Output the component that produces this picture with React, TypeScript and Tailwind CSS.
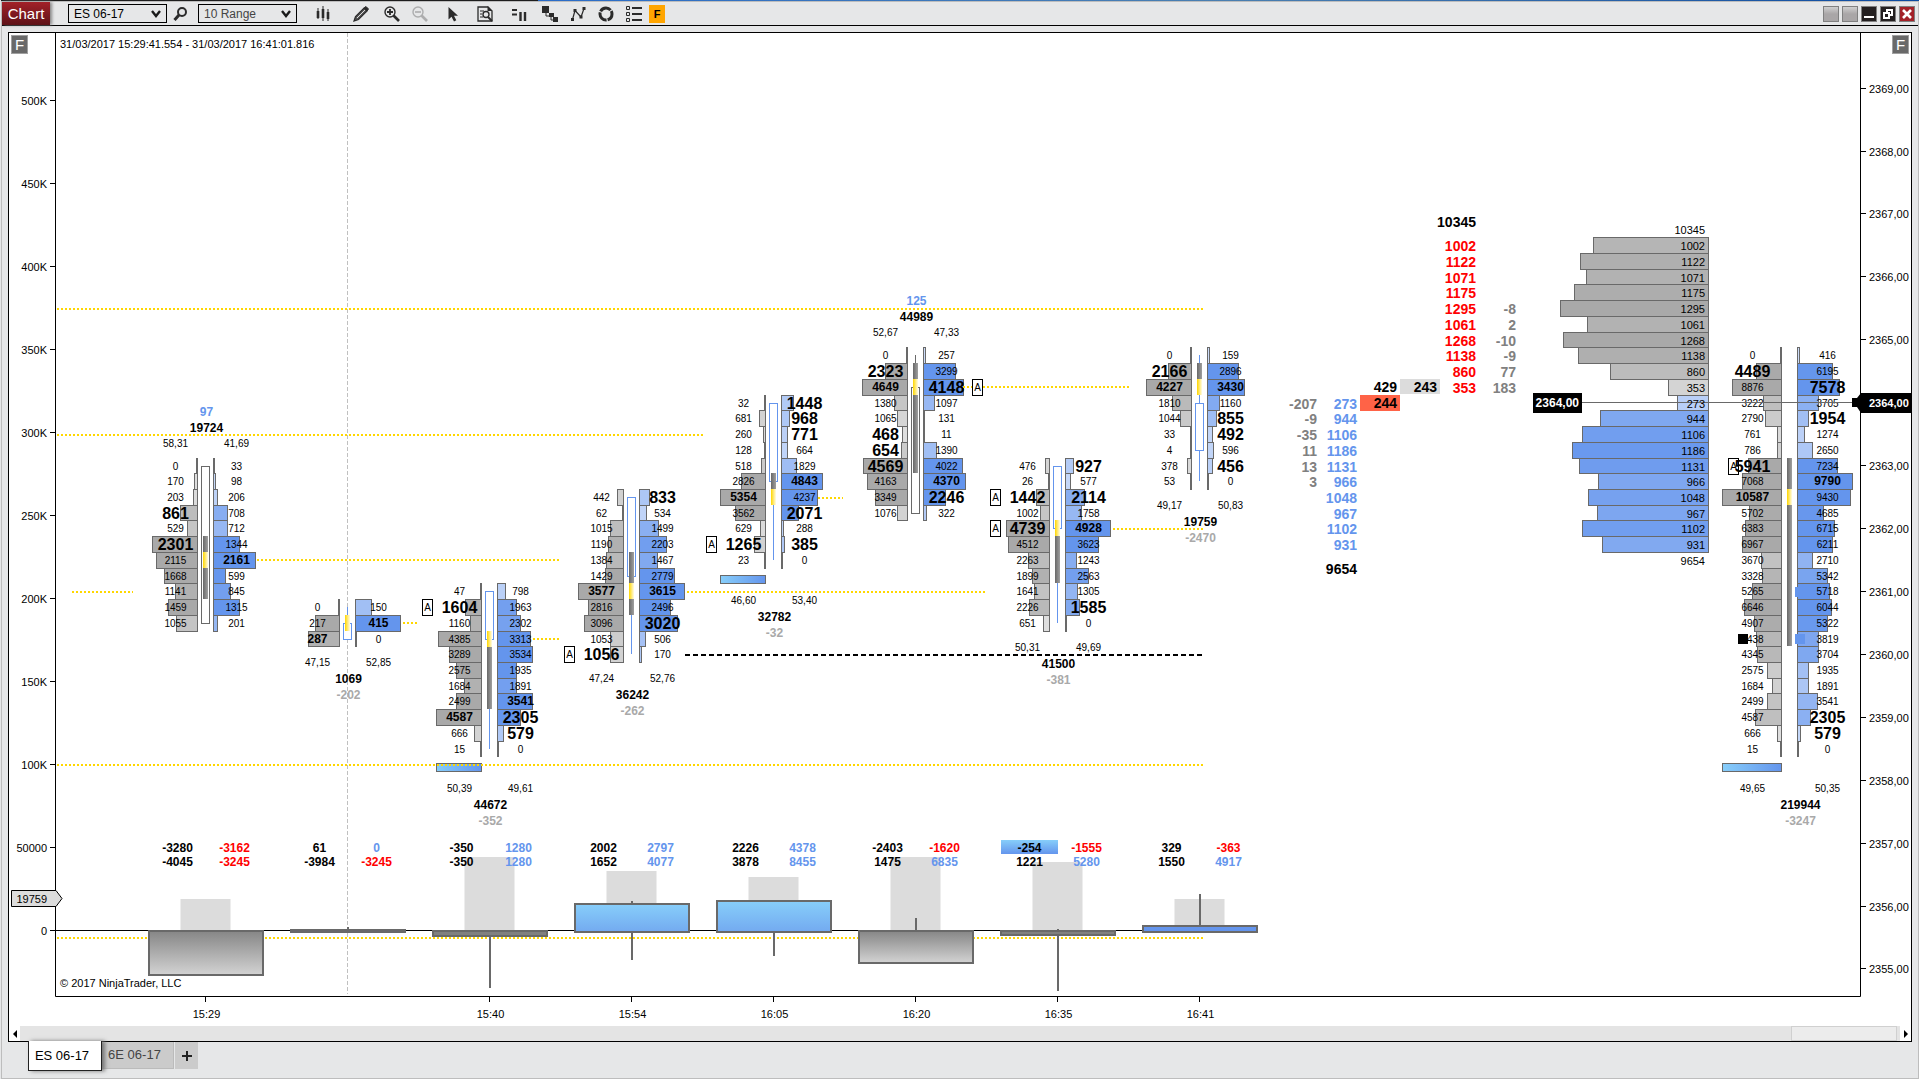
import React from 'react';

type Row = [bid: number, ask: number, imbalance?: 'a' | 'b' | 'ab'];

interface Footprint {
  x: number;
  top: number;
  rows: Row[];
  width?: number;
  labelOffset?: number;
  totalOffset?: number;
  up?: boolean;
  body?: [number, number];
  wick?: [number, number];
  valueArea?: [number, number];
  poc: number;
  alertsLeft?: number[];
  alertsRight?: number[];
  unfinished?: boolean;
  labelsOnTop?: boolean;
  pct: [string, string];
  total: string;
  delta: string;
}

interface Volume {
  x: number;
  time?: string;
  stats: [string, string, string, string];
  volumeTop?: number;
  box: [number, number];
  wick?: [number, number];
  fill: string;
}

const BLUE = '#6495ed';
const GRAY = '#a9a9a9';
const EDGE = '#696969';
const GOLD = '#ffd700';

const priceY = (price: number) => 88.5 + (2369 - price) * 62.92;
const rowTop = (price: number) => Math.round(priceY(price) - 8.5);

const footprints: Footprint[] = [
  {
    x: 205.5,
    top: 2363,
    rows: [[0, 33], [170, 98], [203, 206], [861, 708, 'b'], [529, 712], [2301, 1344, 'b'], [2115, 2161], [1668, 599], [1141, 845], [1459, 1315], [1055, 201]],
    body: [0, 10],
    valueArea: [5, 9],
    poc: 6,
    labelsOnTop: true,
    pct: ['58,31', '41,69'],
    total: '19724',
    delta: '97',
  },
  {
    x: 347.5,
    top: 2360.75,
    rows: [[0, 150], [217, 415], [287, 0]],
    up: true,
    body: [1, 2],
    wick: [0, 2],
    poc: 1,
    pct: ['47,15', '52,85'],
    total: '1069',
    delta: '-202',
  },
  {
    x: 489.5,
    top: 2361,
    rows: [[47, 798], [1604, 1963, 'b'], [1160, 2302], [4385, 3313], [3289, 3534], [2575, 1935], [1684, 1891], [2499, 3541], [4587, 2305, 'a'], [666, 579, 'a'], [15, 0]],
    up: true,
    body: [0, 3],
    wick: [0, 10],
    valueArea: [3, 8],
    poc: 3,
    alertsLeft: [1],
    unfinished: true,
    pct: ['50,39', '49,61'],
    total: '44672',
    delta: '-352',
  },
  {
    x: 631.5,
    top: 2362.5,
    rows: [[442, 833, 'a'], [62, 534], [1015, 1499], [1190, 2203], [1384, 1467], [1429, 2779], [3577, 3615], [2816, 2496], [3096, 3020, 'a'], [1053, 506], [1056, 170, 'b']],
    up: true,
    body: [0, 5],
    wick: [0, 10],
    valueArea: [4, 8],
    poc: 6,
    alertsLeft: [10],
    pct: ['47,24', '52,76'],
    total: '36242',
    delta: '-262',
  },
  {
    x: 773.5,
    top: 2364,
    rows: [[32, 1448, 'a'], [681, 968, 'a'], [260, 771, 'a'], [128, 664], [518, 1829], [2826, 4843], [5354, 4237], [3562, 2071, 'a'], [629, 288], [1265, 385, 'ab'], [23, 0]],
    up: true,
    body: [0, 5],
    wick: [0, 10],
    valueArea: [5, 7],
    poc: 6,
    alertsLeft: [9],
    unfinished: true,
    pct: ['46,60', '53,40'],
    total: '32782',
    delta: '-32',
  },
  {
    x: 915.5,
    top: 2364.75,
    rows: [[0, 257], [2323, 3299, 'b'], [4649, 4148, 'a'], [1380, 1097], [1065, 131], [468, 11, 'b'], [654, 1390, 'b'], [4569, 4022, 'b'], [4163, 4370], [3349, 2246, 'a'], [1076, 322]],
    body: [2, 10],
    wick: [0, 10],
    valueArea: [1, 8],
    poc: 2,
    alertsRight: [2],
    labelsOnTop: true,
    pct: ['52,67', '47,33'],
    total: '44989',
    delta: '125',
  },
  {
    x: 1057.5,
    top: 2363,
    rows: [[476, 927, 'a'], [26, 577], [1442, 2114, 'ab'], [1002, 1758], [4739, 4928, 'b'], [4512, 3623], [2263, 1243], [1899, 2563], [1641, 1305], [2226, 1585, 'a'], [651, 0]],
    up: true,
    body: [0, 4],
    wick: [0, 10],
    valueArea: [4, 8],
    poc: 4,
    alertsLeft: [2, 4],
    pct: ['50,31', '49,69'],
    total: '41500',
    delta: '-381',
  },
  {
    x: 1199.5,
    top: 2364.75,
    rows: [[0, 159], [2166, 2896, 'b'], [4227, 3430], [1810, 1160], [1044, 855, 'a'], [33, 492, 'a'], [4, 596], [378, 456, 'a'], [53, 0]],
    up: true,
    body: [3, 6],
    wick: [0, 8],
    valueArea: [1, 3],
    poc: 2,
    pct: ['49,17', '50,83'],
    total: '19759',
    delta: '-2470',
  },
  {
    x: 1789.5,
    top: 2364.75,
    rows: [[0, 416], [4489, 6195, 'b'], [8876, 7578, 'a'], [3222, 3705], [2790, 1954, 'a'], [761, 1274], [786, 2650], [5941, 7234, 'b'], [7068, 9790], [10587, 9430], [5702, 4685], [6383, 6715], [6967, 6211], [3670, 2710], [3328, 5342], [5265, 5718], [6646, 6044], [4907, 5322], [4438, 3819], [4345, 3704], [2575, 1935], [1684, 1891], [2499, 3541], [4587, 2305, 'a'], [666, 579, 'a'], [15, 0]],
    width: 59,
    labelOffset: 37,
    totalOffset: 11,
    valueArea: [7, 19],
    poc: 9,
    alertsLeft: [7],
    unfinished: true,
    pct: ['49,65', '50,35'],
    total: '219944',
    delta: '-3247',
  },
];

const volumes: Volume[] = [
  { x: 205.5, time: '15:29', stats: ['-3280', '-3162', '-4045', '-3245'], volumeTop: 899, box: [930, 976], fill: 'url(#deltaDown)' },
  { x: 347.5, stats: ['61', '0', '-3984', '-3245'], box: [929, 933], wick: [927, 933], fill: EDGE },
  { x: 489.5, time: '15:40', stats: ['-350', '1280', '-350', '1280'], volumeTop: 857, box: [930, 937], wick: [930, 988], fill: '#808080' },
  { x: 631.5, time: '15:54', stats: ['2002', '2797', '1652', '4077'], volumeTop: 871, box: [903, 933], wick: [901, 960], fill: 'url(#deltaUp)' },
  { x: 773.5, time: '16:05', stats: ['2226', '4378', '3878', '8455'], volumeTop: 877, box: [900, 933], wick: [900, 956], fill: 'url(#deltaUp)' },
  { x: 915.5, time: '16:20', stats: ['-2403', '-1620', '1475', '6835'], volumeTop: 857, box: [930, 964], wick: [918, 932], fill: 'url(#deltaDown)' },
  { x: 1057.5, time: '16:35', stats: ['-254', '-1555', '1221', '5280'], volumeTop: 862, box: [930, 936], wick: [929, 991], fill: '#808080' },
  { x: 1199.5, time: '16:41', stats: ['329', '-363', '1550', '4917'], volumeTop: 899, box: [925, 933], wick: [894, 930], fill: BLUE },
];

const goldLines: [number, number, number][] = [
  [309, 57, 1203],
  [435, 57, 703],
  [560, 257, 559],
  [592, 72, 133],
  [623, 403, 417],
  [639, 533, 559],
  [592, 687, 985],
  [498, 818, 843],
  [387, 963, 1129],
  [529, 1113, 1203],
  [765, 57, 1203],
];

const asks = [1002, 1122, 1071, 1175, 1295, 1061, 1268, 1138, 860, 353];
const bids = [273, 944, 1106, 1186, 1131, 966, 1048, 967, 1102, 931];
const askChanges = ['', '', '', '', '-8', '2', '-10', '-9', '77', '183'];
const bidChanges = ['-207', '-9', '-35', '11', '13', '3'];

const leftAxis = ['0', '50000', '100K', '150K', '200K', '250K', '300K', '350K', '400K', '450K', '500K'];
const rightAxis = [2369, 2368, 2367, 2366, 2365, 2363, 2362, 2361, 2360, 2359, 2358, 2357, 2356, 2355];

function CellText({ x, top, value, big, max }: { x: number; top: number; value: number; big: boolean; max: boolean }) {
  if (big) {
    return <text x={x} y={top + 14} textAnchor="middle" className="text-[16px] font-bold">{value}</text>;
  }
  if (max) {
    return <text x={x} y={top + 12} textAnchor="middle" className="text-[12px] font-bold">{value}</text>;
  }
  return <text x={x} y={top + 12} textAnchor="middle" className="text-[10px]">{value}</text>;
}

function FootprintBar({ data }: { data: Footprint }) {
  const { x, rows, width = 45, labelOffset = 30, totalOffset = 1 } = data;
  const tops = rows.map((_, i) => rowTop(data.top - i * 0.25));
  const bottom = rowTop(data.top - rows.length * 0.25);
  const topOf = (i: number) => (i < tops.length ? tops[i] : bottom);
  const maxBid = Math.max(...rows.map((r) => r[0]));
  const maxAsk = Math.max(...rows.map((r) => r[1]));
  const maxSide = Math.max(maxBid, maxAsk);
  const maxTotal = Math.max(...rows.map((r) => r[0] + r[1]));
  const stroke = data.up ? BLUE : EDGE;
  const below = bottom + (data.unfinished ? 16 : 0);
  const [pctY, totalY, deltaY] = data.labelsOnTop
    ? [tops[0] - 11, tops[0] - 26, tops[0] - 42]
    : [below + 20, below + 37, below + 53];

  return (
    <g>
      {rows.map(([bid, ask], i) => {
        const bidWidth = Math.max(1, Math.round((bid / maxSide) * width));
        const askWidth = Math.max(1, Math.round((ask / maxSide) * width));
        const opacity = Math.min(1, 0.3 + ((bid + ask) / maxTotal) * 1.3);
        const h = topOf(i + 1) - tops[i];
        return (
          <g key={i} stroke={EDGE} fillOpacity={opacity}>
            <rect x={x - 8 - bidWidth} y={tops[i] + 0.5} width={bidWidth} height={h} fill={GRAY} />
            <rect x={x + 8} y={tops[i] + 0.5} width={askWidth} height={h} fill={BLUE} />
          </g>
        );
      })}

      {data.wick && <line x1={x} x2={x} y1={tops[data.wick[0]] + 8} y2={tops[data.wick[1]] + 8} stroke={stroke} />}
      {data.body && (
        <rect
          x={x - 4}
          y={tops[data.body[0]] + 8.5}
          width={8}
          height={tops[data.body[1]] - tops[data.body[0]]}
          fill="#fff"
          stroke={stroke}
        />
      )}
      {data.valueArea && (
        <rect
          x={x - 2.5}
          y={topOf(data.valueArea[0])}
          width={5}
          height={topOf(data.valueArea[1]) - topOf(data.valueArea[0])}
          fill="url(#valueArea)"
        />
      )}
      <rect x={x - 2.5} y={tops[data.poc]} width={5} height={16} fill="url(#poc)" />

      {data.unfinished && (
        <rect x={x - 8 - width} y={bottom + 7.5} width={width} height={8} fill="url(#unfinished)" stroke={EDGE} />
      )}

      {data.alertsLeft?.map((i) => (
        <AlertBox key={i} x={x - (width > 45 ? 61 : 67)} y={tops[i]} />
      ))}
      {data.alertsRight?.map((i) => (
        <AlertBox key={i} x={x + 57} y={tops[i]} />
      ))}

      {rows.map(([bid, ask, flag = ''], i) => (
        <g key={i}>
          <CellText x={x - labelOffset} top={tops[i]} value={bid} big={flag.includes('b')} max={bid === maxBid} />
          <CellText x={x + labelOffset + 1} top={tops[i]} value={ask} big={flag.includes('a')} max={ask === maxAsk} />
        </g>
      ))}

      <text x={x - labelOffset} y={pctY} textAnchor="middle" className="text-[10px]">{data.pct[0]}</text>
      <text x={x + labelOffset + 1} y={pctY} textAnchor="middle" className="text-[10px]">{data.pct[1]}</text>
      <text x={x + totalOffset} y={totalY} textAnchor="middle" className="text-[12px] font-bold">{data.total}</text>
      <text
        x={x + totalOffset}
        y={deltaY}
        textAnchor="middle"
        className="text-[12px] font-bold"
        fill={data.delta.startsWith('-') ? GRAY : BLUE}
      >
        {data.delta}
      </text>
    </g>
  );
}

function AlertBox({ x, y }: { x: number; y: number }) {
  return (
    <g>
      <rect x={x} y={y + 0.5} width={10} height={16} fill="#fff" stroke="#000" />
      <text x={x + 5} y={y + 12} textAnchor="middle" className="text-[10px]">A</text>
    </g>
  );
}

function DeltaPanel() {
  return (
    <g>
      {volumes.map((v) => v.volumeTop && (
        <rect key={v.x} x={v.x - 25} y={v.volumeTop} width={50} height={930 - v.volumeTop} fill="#dcdcdc" />
      ))}
      <line x1={56} x2={1203} y1={930.5} y2={930.5} stroke="#000" />
      <line x1={57} x2={1203} y1={938} y2={938} stroke={GOLD} strokeWidth={2} strokeDasharray="2 2" />
      {volumes.map((v) => {
        const [top, bottom] = v.box;
        return (
          <g key={v.x} stroke={EDGE} strokeWidth={2}>
            <rect x={v.x - 56.5} y={top + 1} width={114} height={bottom - top - 2} fill={v.fill} />
            {v.wick && v.wick[0] < top && <line x1={v.x + 0.5} x2={v.x + 0.5} y1={v.wick[0]} y2={top} />}
            {v.wick && v.wick[1] > bottom && <line x1={v.x + 0.5} x2={v.x + 0.5} y1={bottom} y2={v.wick[1]} />}
          </g>
        );
      })}
      <rect x={1001} y={840} width={57} height={14} fill="url(#cell)" />
      {volumes.map((v) => (
        <g key={v.x} textAnchor="middle" className="text-[12px] font-bold">
          <text x={v.x - 28} y={852}>{v.stats[0]}</text>
          <text x={v.x + 29} y={852} fill={v.stats[1].startsWith('-') ? '#f00' : BLUE}>{v.stats[1]}</text>
          <text x={v.x - 28} y={866}>{v.stats[2]}</text>
          <text x={v.x + 29} y={866} fill={v.stats[3].startsWith('-') ? '#f00' : BLUE}>{v.stats[3]}</text>
        </g>
      ))}
    </g>
  );
}

function DepthLadder() {
  return (
    <g textAnchor="end" className="text-[14px] font-bold">
      <rect x={1400} y={379} width={40} height={15} fill="#dcdcdc" />
      <rect x={1360} y={395} width={40} height={16} fill="#ff6347" />
      <text x={1476} y={227}>10345</text>
      {asks.map((v, i) => (
        <g key={i}>
          <text x={1476} y={rowTop(2366.5 - i * 0.25) + 14} fill="#f00">{v}</text>
          <text x={1516} y={rowTop(2366.5 - i * 0.25) + 14} fill="#808080">{askChanges[i]}</text>
        </g>
      ))}
      <text x={1397} y={392}>429</text>
      <text x={1437} y={392}>243</text>
      <text x={1397} y={408}>244</text>
      {bids.map((v, i) => (
        <g key={i}>
          <text x={1357} y={rowTop(2364 - i * 0.25) + 14} fill={BLUE}>{v}</text>
          <text x={1317} y={rowTop(2364 - i * 0.25) + 14} fill="#808080">{bidChanges[i]}</text>
        </g>
      ))}
      <text x={1357} y={574}>9654</text>
    </g>
  );
}

function DepthProfile() {
  const levels = [...asks, ...bids];
  return (
    <g textAnchor="end" className="text-[11px]">
      {levels.map((v, i) => {
        const top = rowTop(2366.5 - i * 0.25);
        const w = Math.round((v / 1295) * 148);
        return (
          <rect
            key={i}
            x={1708.5 - w}
            y={top + 0.5}
            width={w}
            height={rowTop(2366.25 - i * 0.25) - top}
            fill={i < asks.length ? GRAY : BLUE}
            fillOpacity={Math.min(1, 0.3 + (v / 1295) * 0.72)}
            stroke={EDGE}
          />
        );
      })}
      <line x1={1582} x2={1708} y1={402.5} y2={402.5} stroke={EDGE} />
      <text x={1705} y={234}>10345</text>
      {levels.map((v, i) => (
        <text key={i} x={1705} y={rowTop(2366.5 - i * 0.25) + 13}>{v}</text>
      ))}
      <text x={1705} y={565}>9654</text>
      <rect x={1533} y={393} width={49} height={20} fill="#000" />
      <text x={1579} y={407} fill="#fff" className="text-[12px] font-bold">2364,00</text>
    </g>
  );
}

function Axes() {
  return (
    <g className="text-[11px]">
      <path d="M55.5 33V996.5H1860.5V33" fill="none" stroke="#000" />
      {leftAxis.map((label, i) => (
        <g key={label}>
          <line x1={50} x2={55} y1={930.5 - i * 83} y2={930.5 - i * 83} stroke="#000" />
          <text x={47} y={934.5 - i * 83} textAnchor="end">{label}</text>
        </g>
      ))}
      {rightAxis.map((price) => {
        const y = Math.floor(priceY(price) - 0.4) + 0.5;
        return (
          <g key={price}>
            <line x1={1861} x2={1866} y1={y} y2={y} stroke="#000" />
            <text x={1869} y={y + 4}>{price},00</text>
          </g>
        );
      })}
      {volumes.map((v) => v.time && (
        <g key={v.x}>
          <line x1={v.x} x2={v.x} y1={997} y2={1002} stroke="#000" />
          <text x={v.x + 1} y={1018} textAnchor="middle">{v.time}</text>
        </g>
      ))}
      <path d="M11.5 890.5H56L62 898.5L56 906.5H11.5Z" fill="#dcdcdc" stroke="#000" />
      <text x={47} y={903} textAnchor="end">19759</text>
      <path d="M1852 398H1857L1861 393H1911V413H1861L1857 407H1852Z" fill="#000" />
      <text x={1869} y={407} fill="#fff" className="font-bold">2364,00</text>
    </g>
  );
}

function Chart() {
  return (
    <svg viewBox="9 33 1902 993" className="block w-full" role="img" aria-label="ES 06-17 footprint chart">
      <defs>
        <linearGradient id="valueArea">
          <stop offset="0" stopColor="#696969" />
          <stop offset="1" stopColor="#a0a0a0" />
        </linearGradient>
        <linearGradient id="poc">
          <stop offset="0" stopColor="#ffd700" />
          <stop offset="1" stopColor="#fffbe6" />
        </linearGradient>
        <linearGradient id="unfinished">
          <stop offset="0" stopColor="#87cefa" />
          <stop offset="1" stopColor="#6495ed" />
        </linearGradient>
        <linearGradient id="cell" x2="0" y2="1">
          <stop offset="0" stopColor="#87cefa" />
          <stop offset="1" stopColor="#6495ed" />
        </linearGradient>
        <linearGradient id="deltaUp" x2="0" y2="1">
          <stop offset="0" stopColor="#87cefa" />
          <stop offset="1" stopColor="#73aaf0" />
        </linearGradient>
        <linearGradient id="deltaDown" x2="0" y2="1">
          <stop offset="0" stopColor="#868686" />
          <stop offset="1" stopColor="#d3d3d3" />
        </linearGradient>
      </defs>

      <line x1={347.5} x2={347.5} y1={33} y2={994} stroke="#c0c0c0" strokeDasharray="4 2" />
      <DepthProfile />
      {footprints.map((f) => (
        <FootprintBar key={f.x} data={f} />
      ))}
      <line x1={1709} x2={1855} y1={402.5} y2={402.5} stroke={EDGE} />
      <rect x={1738} y={634} width={10} height={10} fill="#000" />
      <rect x={1795} y={634} width={10} height={10} fill={BLUE} />
      <rect x={1795} y={587} width={10} height={10} fill={BLUE} />

      <g stroke={GOLD} strokeWidth={2} strokeDasharray="2 2">
        {goldLines.map(([y, x1, x2]) => (
          <line key={`${y}-${x1}`} x1={x1} x2={x2} y1={y} y2={y} />
        ))}
      </g>
      <line x1={685} x2={1202} y1={655} y2={655} stroke="#000" strokeWidth={2} strokeDasharray="5 3" />
      <AlertBox x={972.5} y={379} />

      <DepthLadder />
      <DeltaPanel />
      <Axes />
      <text x={60} y={48} className="text-[11px]">31/03/2017 15:29:41.554 - 31/03/2017 16:41:01.816</text>
      <text x={60} y={987} className="text-[11px]">© 2017 NinjaTrader, LLC</text>
    </svg>
  );
}

function Picker({ label, value, options, className }: { label: string; value: string; options: string[]; className: string }) {
  return (
    <div className="relative">
      <select
        aria-label={label}
        defaultValue={value}
        className={`block h-[19px] w-[99px] appearance-none rounded-none border border-black bg-[#e6e7e8] pl-[5px] text-[12px] leading-4 ${className}`}
      >
        {options.map((o) => (
          <option key={o}>{o}</option>
        ))}
      </select>
      <svg viewBox="0 0 10 8" className="pointer-events-none absolute top-[6px] right-1.5 h-2 w-2.5" fill="none" stroke="#1a1a1a" strokeWidth="2.4">
        <path d="M1 1L5 6L9 1" />
      </svg>
    </div>
  );
}

function ToolButton({ label, className = '', children }: { label: string; className?: string; children: React.ReactNode }) {
  return (
    <button aria-label={label} className={`flex h-5 w-7 items-center justify-center ${className}`}>
      <svg viewBox="0 0 16 16" className="size-4" fill="none" stroke="#2b2b2b" strokeWidth="1.6">
        {children}
      </svg>
    </button>
  );
}

function Toolbar() {
  return (
    <div className="flex h-6 items-center border-b border-black pr-[3px]">
      <button className="h-[23px] w-12 bg-linear-to-b from-[#a32128] to-[#5e1218] text-[15px] leading-5 text-white shadow-[2px_0_3px_#888]">Chart</button>
      <Picker label="Instrument" value="ES 06-17" options={['ES 06-17', '6E 06-17']} className="ml-[18px] text-black" />
      <button aria-label="Search instrument" className="ml-1.5 flex size-4 items-center justify-center">
        <svg viewBox="0 0 16 16" className="size-4" fill="none" stroke="#2b2b2b">
          <circle cx="9" cy="6" r="4" strokeWidth="2" />
          <path d="M6 9L1.500 14" strokeWidth="3" />
        </svg>
      </button>
      <Picker label="Interval" value="10 Range" options={['10 Range', '5 Range']} className="ml-[9px] text-[#444]" />

      <ToolButton label="Chart style" className="ml-3">
        <path d="M3 2v11M8 0v15M13 3v12" strokeWidth="1" />
        <path d="M3 5v7M8 3v9M13 6v7" strokeWidth="2.600" />
      </ToolButton>
      <ToolButton label="Drawing tools" className="ml-2.5">
        <path d="M1 15L2.500 10.500L11 2L14 5L5.500 13.500Z" fill="#555" strokeWidth="1.2" />
        <path d="M11 2L13 .5L15.500 3L14 5Z" fill="#2b2b2b" strokeWidth="1" />
        <path d="M4 12L12 4" stroke="#ddd" strokeWidth="1" />
      </ToolButton>
      <ToolButton label="Zoom in" className="ml-[3px]">
        <circle cx="6" cy="6" r="5" strokeWidth="1.4" />
        <path d="M6 3v6M3 6h6" strokeWidth="1.8" />
        <path d="M9.500 9.500L15 15" strokeWidth="2.600" />
      </ToolButton>
      <ToolButton label="Zoom out" className="opacity-30">
        <circle cx="6" cy="6" r="5" strokeWidth="1.4" />
        <path d="M3 6h6" />
        <path d="M9.500 9.500L15 15" strokeWidth="2.600" />
      </ToolButton>
      <ToolButton label="Pointer" className="ml-[5px]">
        <path d="M3.500 1V13.500L6.500 10.700L9 15.500L11.300 14.300L9 9.800H13Z" fill="#2b2b2b" stroke="none" />
      </ToolButton>
      <ToolButton label="Data box" className="ml-1">
        <path d="M15 8V15H1V1H11L15 5V8" strokeWidth="1.300" />
        <path d="M10.500 0L15.500 5H10.500Z" fill="#2b2b2b" stroke="none" />
        <path d="M3 5h4M3 8h2M3 11h3" strokeWidth="1.200" />
        <circle cx="9" cy="8.500" r="3" strokeWidth="1.400" />
        <path d="M11 11L15 15" strokeWidth="2" />
      </ToolButton>
      <ToolButton label="Bar settings" className="ml-1.5">
        <path d="M1 4h5M1 8.500h5" strokeWidth="2" />
        <path d="M9.500 6v9M14 6v9" strokeWidth="2.400" />
      </ToolButton>
      <ToolButton label="Strategies" className="ml-[3px]">
        <path d="M0 0h7v7H0ZM7 7h5v4H7ZM11 11h5v5h-5Z" fill="#2b2b2b" stroke="none" />
        <path d="M4 7v3h4M9 10v4h3" strokeWidth="1" />
      </ToolButton>
      <ToolButton label="Indicators">
        <path d="M2.500 13.500L5 4.500L11 11L14 2.500" strokeWidth="1.200" />
        <path d="M1 12h3v3H1ZM3.500 3h3v3h-3ZM9.500 9.500h3v3h-3ZM12.500 1h3v3h-3Z" fill="#2b2b2b" stroke="none" />
      </ToolButton>
      <ToolButton label="Reload">
        <circle cx="8" cy="8" r="6" strokeWidth="3" strokeDasharray="11.500 1.060" strokeDashoffset="4" />
      </ToolButton>
      <ToolButton label="Properties">
        <path d="M.5.5h3v3h-3ZM.5 6.500h3v3h-3ZM.5 12.500h3v3h-3Z" strokeWidth="1" />
        <path d="M6 2h10M6 8h10M6 14h10" strokeWidth="2" />
      </ToolButton>
      <button className="ml-px h-[18px] w-4 bg-[#ffa500] text-[11px] leading-4 font-bold text-black">F</button>

      <div className="ml-auto flex gap-[3px]">
        <button aria-label="Link instrument" className="size-4 border border-[#808080] bg-linear-to-b from-[#d0d0d0] to-[#a9a6a7] to-50%" />
        <button aria-label="Link interval" className="size-4 border border-[#808080] bg-linear-to-b from-[#d0d0d0] to-[#a9a6a7] to-50%" />
        <button aria-label="Minimize" className="size-4 border border-[#808080] bg-[#231f20]">
          <svg viewBox="0 0 14 14" className="size-3.5"><path d="M2 9h10v2H2Z" fill="#fff" /></svg>
        </button>
        <button aria-label="Restore" className="size-4 border border-[#808080] bg-[#231f20]">
          <svg viewBox="0 0 14 14" className="size-3.5" fill="none" stroke="#fff" strokeWidth="2">
            <path d="M6 5V3H11V8H9M3 6H8V11H3Z" />
          </svg>
        </button>
        <button aria-label="Close" className="size-4 border border-[#808080] bg-[#a32128]">
          <svg viewBox="0 0 14 14" className="size-3.5" stroke="#fff" strokeWidth="2.600">
            <path d="M3 3L11 11M11 3L3 11" />
          </svg>
        </button>
      </div>
    </div>
  );
}

function ScrollBar() {
  return (
    <div className="flex h-[15px] items-stretch bg-[#e4e4e4]">
      <button aria-label="Scroll left" className="flex w-[11px] items-center justify-center bg-white">
        <svg viewBox="0 0 4 8" className="h-2 w-1"><path d="M4 0V8L0 4Z" fill="#000" /></svg>
      </button>
      <div className="mr-[3px] ml-auto w-[106px] border border-[#d0d0d0] bg-[#ececec]" />
      <button aria-label="Scroll right" className="flex w-[11px] items-center justify-center bg-white">
        <svg viewBox="0 0 4 8" className="h-2 w-1"><path d="M0 0V8L4 4Z" fill="#000" /></svg>
      </button>
    </div>
  );
}

export default function App() {
  return (
    <div className="flex min-h-screen flex-col bg-[#e6e7e8] pl-px font-['Liberation_Sans',Arial,sans-serif] text-black">
      <div className="flex h-px">
        <div className="w-[28%] bg-[#1d1d1d]" />
        <div className="flex-1 bg-linear-to-r from-[#2a6cc8] via-[#4a7fb0] to-[#0a4aa0]" />
      </div>
      <div className="flex flex-1 flex-col border border-[#bdbdbd]">
        <Toolbar />
        <div className="mt-[6px] mr-1.5 ml-1.5 border border-black bg-white">
          <div className="relative">
            <Chart />
            <button className="absolute top-0.5 left-0.5 h-[19px] w-[17px] border border-[#a0a0a0] bg-[#696969] text-[15px] leading-4 text-white">F</button>
            <button className="absolute top-0.5 right-0.5 h-[19px] w-[17px] border border-[#a0a0a0] bg-[#696969] text-[15px] leading-4 text-white">F</button>
          </div>
          <ScrollBar />
        </div>
        <div className="ml-[26px] flex items-start text-[13px] text-[#222]">
          <button className="relative -mt-px h-[30px] w-[74px] border border-t-0 border-[#222] bg-white pr-1.5 text-black shadow-[3px_0_4px_#777]">ES 06-17</button>
          <button className="h-[27px] w-[72px] border-r border-b border-[#bbb] bg-[#cbcbcb] pr-1.5 text-[#444]">6E 06-17</button>
          <button aria-label="Add tab" className="ml-px flex h-[27px] w-[23px] items-center justify-center bg-[#cbcbcb]">
            <svg viewBox="0 0 10 10" className="size-2.5" stroke="#222" strokeWidth="2"><path d="M5 0V10M0 5H10" /></svg>
          </button>
        </div>
      </div>
    </div>
  );
}
